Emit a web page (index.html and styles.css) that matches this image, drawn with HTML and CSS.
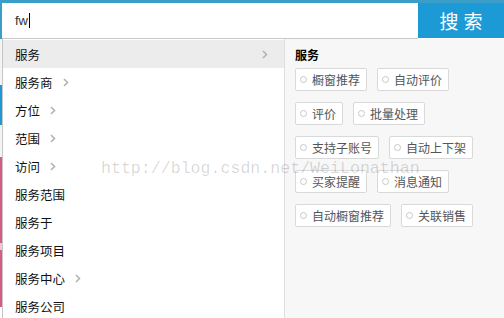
FILE: index.html
```html
<!DOCTYPE html>
<html lang="zh-CN">
<head>
    <meta charset="UTF-8">
    <meta name="viewport" content="width=device-width, initial-scale=1.0">
    <title>搜索建议</title>
    <link rel="stylesheet" href="styles.css">
</head>
<body>
    <div class="search-bar">
        <div class="search-input">fw<span class="caret"></span></div>
        <button class="search-btn">搜索</button>
    </div>

    <div class="dropdown-wrap">
        <div class="page-edge">
            <span class="edge-blank" style="height: 46px"></span>
            <span class="edge-blue" style="height: 40px"></span>
            <span class="edge-blank" style="height: 32px"></span>
            <span class="edge-pink" style="height: 86px"></span>
            <span class="edge-light" style="height: 7px"></span>
            <span class="edge-pink" style="height: 57px"></span>
        </div>

        <div class="dropdown">
            <ul class="suggest-list">
                <li class="suggest-item active"><span>服务</span><svg class="chevron push" viewBox="0 0 6 9"><path d="M1 1l3.5 3.5L1 8"/></svg></li>
                <li class="suggest-item"><span>服务商</span><svg class="chevron" viewBox="0 0 6 9"><path d="M1 1l3.5 3.5L1 8"/></svg></li>
                <li class="suggest-item"><span>方位</span><svg class="chevron" viewBox="0 0 6 9"><path d="M1 1l3.5 3.5L1 8"/></svg></li>
                <li class="suggest-item"><span>范围</span><svg class="chevron" viewBox="0 0 6 9"><path d="M1 1l3.5 3.5L1 8"/></svg></li>
                <li class="suggest-item"><span>访问</span><svg class="chevron" viewBox="0 0 6 9"><path d="M1 1l3.5 3.5L1 8"/></svg></li>
                <li class="suggest-item"><span>服务范围</span></li>
                <li class="suggest-item"><span>服务于</span></li>
                <li class="suggest-item"><span>服务项目</span></li>
                <li class="suggest-item"><span>服务中心</span><svg class="chevron" viewBox="0 0 6 9"><path d="M1 1l3.5 3.5L1 8"/></svg></li>
                <li class="suggest-item"><span>服务公司</span></li>
            </ul>

            <div class="sub-panel">
                <h4>服务</h4>
                <div class="tag-list">
                    <label class="tag"><i class="radio"></i>橱窗推荐</label>
                    <label class="tag"><i class="radio"></i>自动评价</label>
                    <label class="tag"><i class="radio"></i>评价</label>
                    <label class="tag"><i class="radio"></i>批量处理</label>
                    <label class="tag"><i class="radio"></i>支持子账号</label>
                    <label class="tag"><i class="radio"></i>自动上下架</label>
                    <label class="tag"><i class="radio"></i>买家提醒</label>
                    <label class="tag"><i class="radio"></i>消息通知</label>
                    <label class="tag"><i class="radio"></i>自动橱窗推荐</label>
                    <label class="tag"><i class="radio"></i>关联销售</label>
                </div>
            </div>
        </div>

        <div class="watermark">http://blog.csdn.net/WeiLonathan</div>
    </div>
</body>
</html>
```

FILE: styles.css
```css
* {
    margin: 0;
    padding: 0;
    box-sizing: border-box;
}

body {
    font-family: "Noto Sans CJK SC", "Noto Sans", sans-serif;
    font-size: 12px;
    color: #222;
    background: #fff;
    width: 504px;
    height: 318px;
    overflow: hidden;
}

.search-bar {
    display: flex;
    height: 39px;
    border-top: 3px solid #3b9ec8;
    border-left: 2px solid #3b9ec8;
}

.search-input {
    flex: 1;
    display: flex;
    align-items: center;
    padding-left: 13px;
    font-family: "Liberation Sans", "Noto Sans", sans-serif;
    font-size: 13px;
    color: #333;
    border-bottom: 1px solid #c9c9c9;
}

.caret {
    display: inline-block;
    width: 1px;
    height: 15px;
    background: #000;
    margin-left: 1px;
}

.search-btn {
    width: 86px;
    height: 35px;
    border: none;
    background: #1c9ad6;
    color: #fff;
    font-family: "Noto Sans CJK SC", sans-serif;
    font-size: 19px;
    letter-spacing: 5px;
    padding-left: 5px;
}

.dropdown-wrap {
    position: relative;
    display: flex;
    height: 279px;
}

.page-edge {
    width: 2px;
    display: flex;
    flex-direction: column;
}

.edge-blank {
    background: #f4f4f4;
}

.edge-blue {
    background: #1c9ad6;
}

.edge-pink {
    background: #d95a82;
}

.edge-light {
    background: #f1c9d6;
}

.dropdown {
    flex: 1;
    display: flex;
    border-left: 1px solid #c6c6c6;
}

.suggest-list {
    list-style: none;
    width: 281px;
    padding-top: 1px;
    background: #fff;
}

.suggest-item {
    display: flex;
    align-items: center;
    height: 28px;
    padding: 0 16px 0 12px;
    font-size: 12.5px;
    color: #111;
}

.suggest-item.active {
    background: #ececec;
}

.chevron {
    width: 6px;
    height: 9px;
    margin-left: 10px;
    fill: none;
    stroke: #b4b4b4;
    stroke-width: 1.6;
}

.chevron.push {
    margin-left: auto;
}

.sub-panel {
    flex: 1;
    background: #f7f7f7;
    border-left: 1px solid #dedede;
    padding: 8px 12px 0 10px;
}

.sub-panel h4 {
    font-size: 12px;
    font-weight: bold;
    color: #000;
    line-height: 16px;
}

.tag-list {
    display: flex;
    flex-wrap: wrap;
    gap: 11px 10px;
    margin-top: 5px;
}

.tag {
    display: flex;
    align-items: center;
    height: 23px;
    padding: 0 6px 0 4px;
    background: #fff;
    border: 1px solid #d9d9d9;
    border-radius: 2px;
    font-size: 12px;
    color: #555;
}

.radio {
    width: 7px;
    height: 7px;
    border: 1px solid #c8c8c8;
    border-radius: 50%;
    margin-right: 5px;
}

.watermark {
    position: absolute;
    left: 101px;
    top: 120px;
    font-family: "Liberation Mono", monospace;
    font-size: 16.6px;
    color: rgba(0, 0, 0, 0.16);
    pointer-events: none;
}
```
